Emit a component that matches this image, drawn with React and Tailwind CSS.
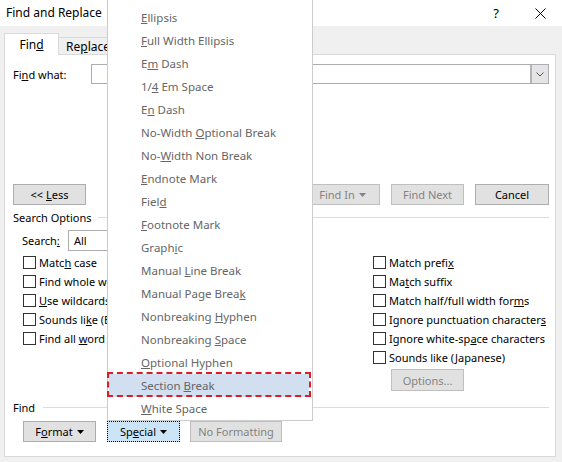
import React from "react";

function Caret({ color = "#000" }) {
  return (
    <svg width="7" height="4" viewBox="0 0 7 4" className="ml-[4px] mt-[1px]">
      <path d="M0 0H7L3.5 4Z" fill={color} />
    </svg>
  );
}

function Btn({ children, className = "", disabled = false }) {
  return (
    <div
      className={
        "h-[21px] flex items-center justify-center border bg-[#e1e1e1] " +
        (disabled ? "border-[#bfbfbf] text-[#838383] " : "border-[#adadad] text-black ") +
        className
      }
    >
      {children}
    </div>
  );
}

function Check({ children }) {
  return (
    <div className="h-[19px] flex items-center">
      <div className="w-[13px] h-[13px] border border-[#333] bg-white shrink-0" />
      <span className="ml-[3px] whitespace-nowrap">{children}</span>
    </div>
  );
}

const menuItems = [
  [<><u>E</u>llipsis</>],
  [<><u>F</u>ull Width Ellipsis</>],
  [<>E<u>m</u> Dash</>],
  [<>1/<u>4</u> Em Space</>],
  [<>E<u>n</u> Dash</>],
  [<>No-Width <u>O</u>ptional Break</>],
  [<>No-<u>W</u>idth Non Break</>],
  [<><u>E</u>ndnote Mark</>],
  [<>Fiel<u>d</u></>],
  [<><u>F</u>ootnote Mark</>],
  [<>Graph<u>i</u>c</>],
  [<>Manual <u>L</u>ine Break</>],
  [<>Manual Page Brea<u>k</u></>],
  [<>Nonbreaking <u>H</u>yphen</>],
  [<>Nonbreaking <u>S</u>pace</>],
  [<><u>O</u>ptional Hyphen</>],
  [<>Section <u>B</u>reak</>, true],
  [<><u>W</u>hite Space</>]
];

export default function App() {
  return (
    <div className="relative w-[562px] h-[462px] overflow-hidden bg-[#f0f0f0] text-[11px] leading-none text-black font-['Noto_Sans',sans-serif]">
      {/* title bar */}
      <div className="h-[26px] bg-white flex items-center pl-[6px] text-[12px]">
        <span>Find and Replace</span>
        <span className="ml-auto mr-[36px] text-[13px]">?</span>
        <svg width="11" height="11" viewBox="0 0 11 11" className="mr-[16px]">
          <path d="M0.5 0.5L10.5 10.5M10.5 0.5L0.5 10.5" stroke="#000" strokeWidth="1" />
        </svg>
      </div>

      {/* tabs */}
      <div className="flex items-end h-[28px] pl-[4px] text-[12px]">
        <div className="relative z-10 -mb-px w-[55px] h-[22px] bg-white border border-b-0 border-[#d9d9d9] flex items-center justify-center">
          Fin<u>d</u>
        </div>
        <div className="w-[62px] h-[17px] border border-l-0 border-b-0 border-[#d9d9d9] flex items-center pl-[7px] pt-[1px]">
          Re<u>p</u>lace
        </div>
      </div>

      {/* panel */}
      <div className="ml-[4px] w-[552px] h-[403px] bg-white border border-[#d9d9d9] pt-[9px] pl-[8px] pr-[6px]">
        <div className="flex items-center h-[20px]">
          <span className="w-[78px]">Fi<u>n</u>d what:</span>
          <div className="flex-1 h-[20px] border border-[#abadb3] flex justify-end">
            <div className="w-[18px] h-full bg-[#e5e5e5] border-2 border-r-0 border-y-0 border-[#b4b4b4] flex items-center justify-center">
              <svg width="8" height="5" viewBox="0 0 8 5">
                <path d="M0.5 0.5L4 4L7.5 0.5" stroke="#555" fill="none" />
              </svg>
            </div>
          </div>
        </div>

        <div className="flex mt-[100px]">
          <Btn className="w-[73px]">
            &lt;&lt; <u className="ml-[3px]">L</u>ess
          </Btn>
          <Btn disabled className="ml-auto w-[75px]">
            Find In <Caret color="#838383" />
          </Btn>
          <Btn disabled className="ml-[11px] w-[73px]">Find Next</Btn>
          <Btn className="ml-[11px] w-[74px]">Cancel</Btn>
        </div>

        <div className="flex items-center h-[16px] mt-[4px]">
          <span>Search Options</span>
          <div className="flex-1 h-px bg-[#dcdcdc] ml-[6px]" />
        </div>

        <div className="flex items-center h-[21px] mt-[5px] pl-[9px]">
          <span className="w-[46px]">Search<u>:</u></span>
          <div className="w-[150px] h-[21px] border border-[#adadad] flex items-center pl-[5px]">All</div>
        </div>

        <div className="flex mt-[2px]">
          <div className="w-[360px] shrink-0 pl-[10px]">
            <Check>Matc<u>h</u> case</Check>
            <Check>Find whole words onl<u>y</u></Check>
            <Check><u>U</u>se wildcards</Check>
            <Check>Sounds li<u>k</u>e (English)</Check>
            <Check>Find all <u>w</u>ord forms (English)</Check>
          </div>
          <div className="flex flex-col">
            <Check>Match prefi<u>x</u></Check>
            <Check>Ma<u>t</u>ch suffix</Check>
            <Check>Match half/full width for<u>m</u>s</Check>
            <Check>Ignore punctuation character<u>s</u></Check>
            <Check>Ignore white-sp<u>a</u>ce characters</Check>
            <Check>Sounds like (<u>J</u>apanese)</Check>
            <Btn disabled className="mt-[2px] ml-[18px] w-[73px] h-[22px]">Options...</Btn>
          </div>
        </div>

        <div className="flex items-center h-[16px] mt-[8px]">
          <span>Find</span>
          <div className="flex-1 h-px bg-[#dcdcdc] ml-[8px]" />
        </div>

        <div className="flex mt-[6px] pl-[10px]">
          <Btn className="w-[73px]">
            F<u>o</u>rmat <Caret />
          </Btn>
          <div className="ml-[11px] w-[73px] h-[21px] flex items-center justify-center bg-[#cce4f7] border border-dotted border-black">
            Sp<u>e</u>cial <Caret />
          </div>
          <Btn disabled className="ml-[10px] w-[92px]">No Formatting</Btn>
        </div>
      </div>

      {/* special menu */}
      <div className="absolute left-[107px] top-0 w-[206px] h-[421px] bg-white border border-t-0 border-[#cccccc] pt-[6px] text-[11.5px] text-[#666666]">
        {menuItems.map(([label, active], i) => (
          <div key={i} className="relative h-[23px] flex items-center pl-[33px]">
            {active && <div className="absolute inset-y-0 left-[1px] right-[3px] bg-[#d1dff1]" />}
            {active && (
              <div className="absolute -top-[2px] bottom-0 -left-px right-[1px] border-2 border-dashed border-[#e01b24]" />
            )}
            <span className="relative">{label}</span>
          </div>
        ))}
      </div>
    </div>
  );
}
